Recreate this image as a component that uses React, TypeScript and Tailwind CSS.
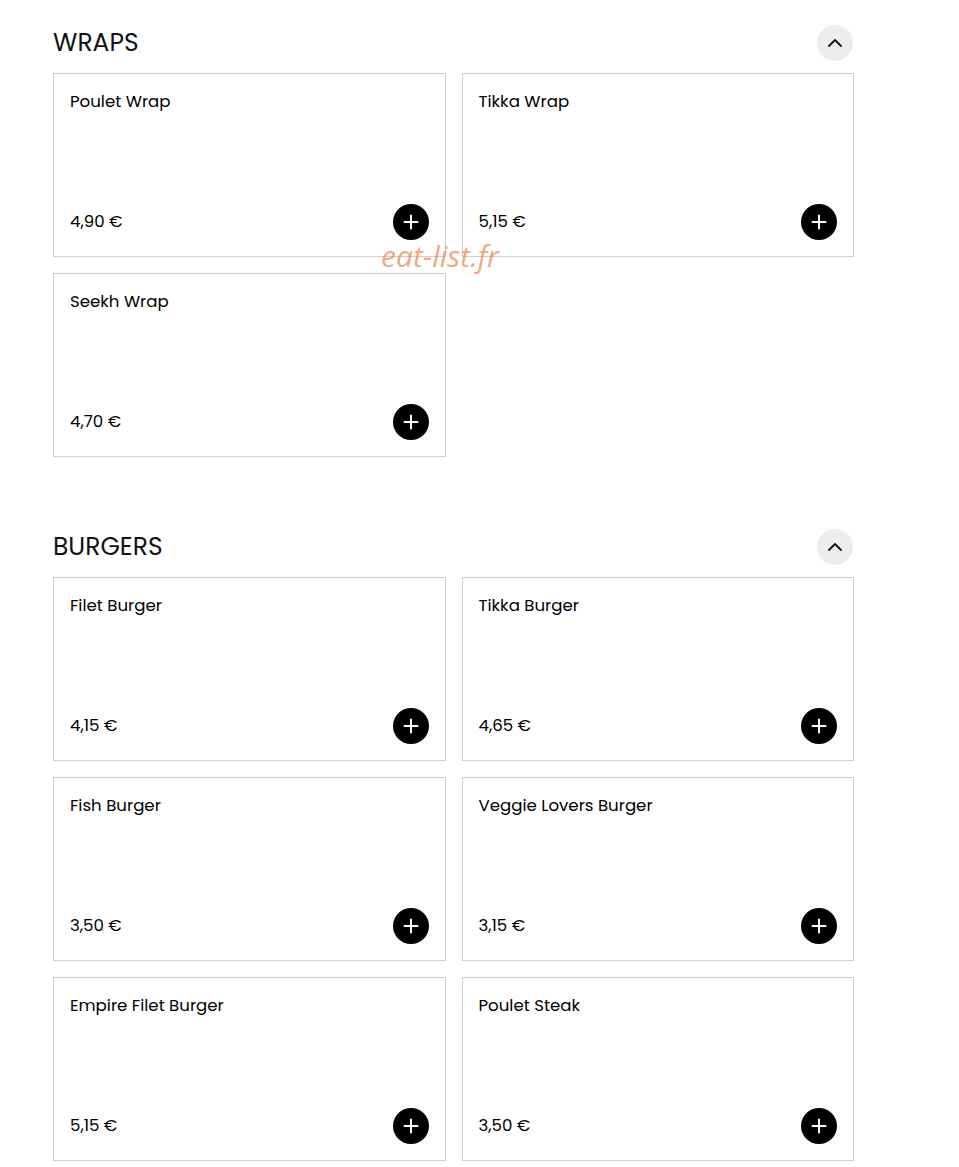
import React from 'react';

type Item = { name: string; price: string };

const sections: { title: string; items: Item[] }[] = [
  {
    title: 'WRAPS',
    items: [
      { name: 'Poulet Wrap', price: '4,90 €' },
      { name: 'Tikka Wrap', price: '5,15 €' },
      { name: 'Seekh Wrap', price: '4,70 €' },
    ],
  },
  {
    title: 'BURGERS',
    items: [
      { name: 'Filet Burger', price: '4,15 €' },
      { name: 'Tikka Burger', price: '4,65 €' },
      { name: 'Fish Burger', price: '3,50 €' },
      { name: 'Veggie Lovers Burger', price: '3,15 €' },
      { name: 'Empire Filet Burger', price: '5,15 €' },
      { name: 'Poulet Steak', price: '3,50 €' },
    ],
  },
];

const PlusIcon = () => (
  <svg width="16" height="16" viewBox="0 0 16 16" fill="none">
    <path d="M8 1.5v13M1.5 8h13" stroke="white" strokeWidth="2" strokeLinecap="round" />
  </svg>
);

const ChevronUp = () => (
  <svg width="16" height="16" viewBox="0 0 16 16" fill="none">
    <path d="M2 11l6-6 6 6" stroke="#111" strokeWidth="1.8" strokeLinecap="round" strokeLinejoin="round" />
  </svg>
);

const ProductCard = ({ item }: { item: Item }) => (
  <div className="h-[184px] border border-[#cfcfcf] bg-white p-4 flex flex-col justify-between">
    <h3 className="text-[16.6px] leading-[22px] text-black pt-px">{item.name}</h3>
    <div className="flex items-center justify-between">
      <span className="text-[16.6px] text-black">{item.price}</span>
      <button className="w-9 h-9 rounded-full bg-black flex items-center justify-center">
        <PlusIcon />
      </button>
    </div>
  </div>
);

export default function App() {
  return (
    <div
      className="relative min-h-screen bg-white pt-[25px] pb-10"
      style={{ fontFamily: "Poppins, Inter, 'Noto Sans', sans-serif" }}
    >
      <div className="ml-[53px] w-[801px] flex flex-col gap-[72px]">
        {sections.map((section) => (
          <section key={section.title}>
            <div className="flex items-center justify-between mb-3">
              <h2 className="text-[25px] leading-9 text-[#111]">{section.title}</h2>
              <button className="w-9 h-9 mr-[1px] rounded-full bg-[#ededed] flex items-center justify-center">
                <ChevronUp />
              </button>
            </div>
            <div className="grid grid-cols-2 gap-4">
              {section.items.map((item) => (
                <ProductCard key={item.name} item={item} />
              ))}
            </div>
          </section>
        ))}
      </div>
      <span
        className="absolute left-[381px] top-[233px] text-[30px] italic text-[#f08a5d]/75 pointer-events-none"
        style={{ fontFamily: "'Open Sans', sans-serif" }}
      >
        eat-list.fr
      </span>
    </div>
  );
}
